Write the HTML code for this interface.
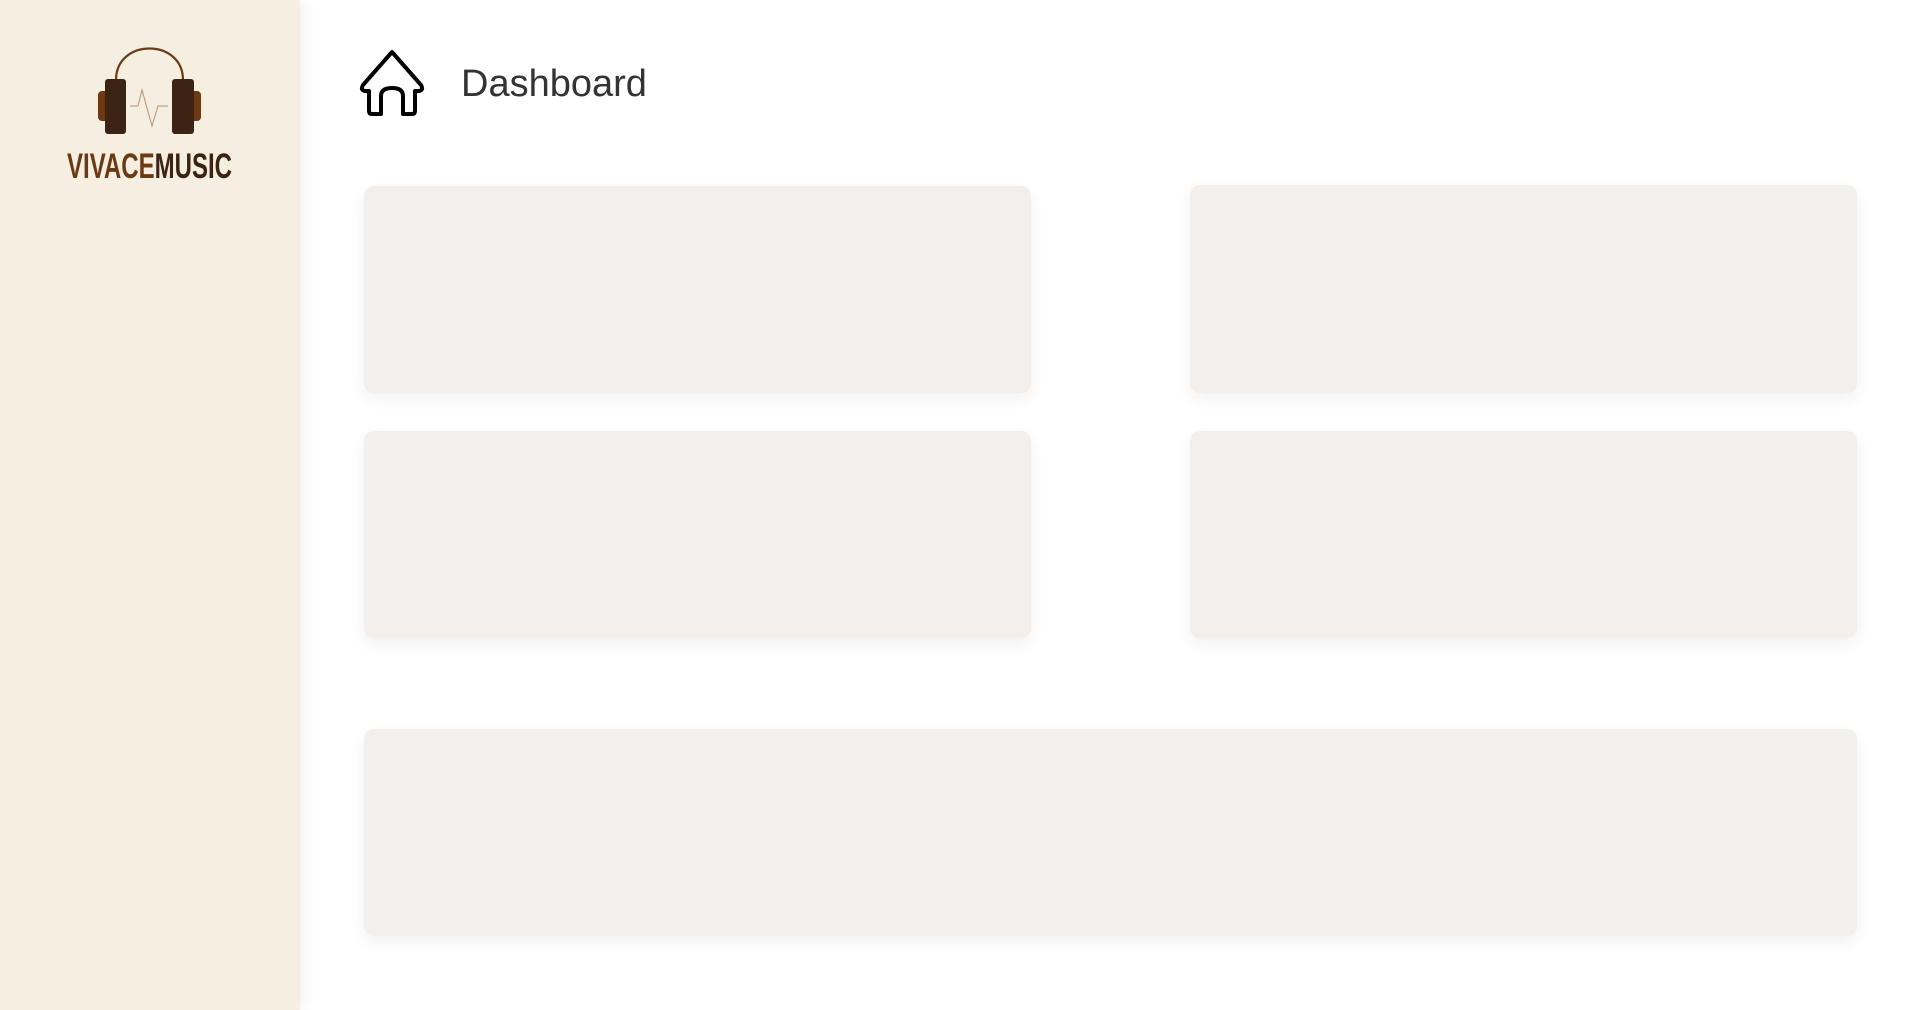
<!DOCTYPE html>
<html><head><meta charset="utf-8"><style>
html,body{margin:0;padding:0;width:1920px;height:1010px;overflow:hidden;background:#fff;font-family:"Liberation Sans",sans-serif;}
.side{position:absolute;left:0;top:0;width:300px;height:1010px;background:#f5efe2;box-shadow:4px 0 14px rgba(0,0,0,0.06);}
.card{position:absolute;background:#f2efed;border-radius:10px;box-shadow:0 6px 16px rgba(0,0,0,0.06);}
.title{position:absolute;left:461px;top:60px;font-size:38px;color:#333;line-height:48px;}
</style></head><body>
<div class="side">
<svg width="300" height="200" style="position:absolute;left:0;top:0">
<path d="M116 80 C116 38 183 38 183 80" fill="none" stroke="#6b3a15" stroke-width="2.2"/>
<rect x="98" y="91" width="12" height="30" rx="4" fill="#6b3a15"/>
<rect x="190" y="91" width="11" height="30" rx="4" fill="#6b3a15"/>
<rect x="105" y="79" width="21" height="55" rx="3" fill="#3d2314"/>
<rect x="172" y="79" width="22" height="55" rx="3" fill="#3d2314"/>
<polyline points="130,106 138,106 142,90 152,126 158,106 168,106" fill="none" stroke="#b89070" stroke-width="1"/>
<text x="67" y="178" font-family="Liberation Sans Narrow, Liberation Sans, sans-serif" font-weight="bold" font-size="35" textLength="165" lengthAdjust="spacingAndGlyphs"><tspan fill="#6b3a15">VIVACE</tspan><tspan fill="#3d2314">MUSIC</tspan></text>
</svg>
</div>
<svg width="70" height="70" style="position:absolute;left:357px;top:48px" viewBox="0 0 70 70">
<path d="M35 4 L64 37 Q67 42 62 43 L58 43 L58 63 Q58 66 55 66 L46 66 L46 48 Q46 40 35 40 Q24 40 24 48 L24 66 L15 66 Q12 66 12 63 L12 43 L8 43 Q3 42 6 37 Z" fill="none" stroke="#000" stroke-width="4" stroke-linejoin="round"/>
</svg>
<div class="title">Dashboard</div>
<div class="card" style="left:364px;top:186px;width:667px;height:207px"></div>
<div class="card" style="left:1190px;top:185px;width:667px;height:208px"></div>
<div class="card" style="left:364px;top:431px;width:667px;height:207px"></div>
<div class="card" style="left:1190px;top:431px;width:667px;height:207px"></div>
<div class="card" style="left:364px;top:729px;width:1493px;height:207px"></div>
</body></html>
